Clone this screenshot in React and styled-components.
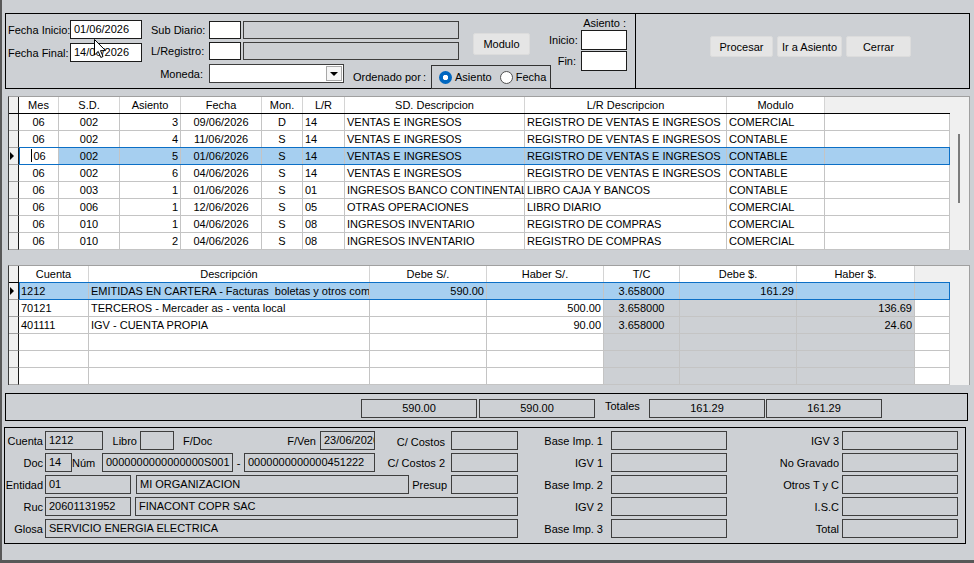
import React from 'react';
import styled, { createGlobalStyle, css } from 'styled-components';

const GlobalStyle = createGlobalStyle`
  html, body {
    margin: 0;
    padding: 0;
  }
  body {
    font-family: "Liberation Sans", Arial, sans-serif;
    font-size: 11px;
    color: #000;
    background: #cdd0d4;
    overflow: hidden;
  }
`;

const grid1Cols = [
  { w: 40, align: 'center', title: 'Mes' },
  { w: 61, align: 'center', title: 'S.D.' },
  { w: 61, align: 'right', title: 'Asiento' },
  { w: 81, align: 'center', title: 'Fecha' },
  { w: 41, align: 'center', title: 'Mon.' },
  { w: 42, align: 'left', title: 'L/R' },
  { w: 180, align: 'left', title: 'SD. Descripcion' },
  { w: 202, align: 'left', title: 'L/R Descripcion' },
  { w: 98, align: 'left', title: 'Modulo' },
  { w: 125, blank: true },
];

const grid1Rows = [
  ['06', '002', '3', '09/06/2026', 'D', '14', 'VENTAS E INGRESOS', 'REGISTRO DE VENTAS E INGRESOS', 'COMERCIAL'],
  ['06', '002', '4', '11/06/2026', 'S', '14', 'VENTAS E INGRESOS', 'REGISTRO DE VENTAS E INGRESOS', 'CONTABLE'],
  ['06', '002', '5', '01/06/2026', 'S', '14', 'VENTAS E INGRESOS', 'REGISTRO DE VENTAS E INGRESOS', 'CONTABLE'],
  ['06', '002', '6', '04/06/2026', 'S', '14', 'VENTAS E INGRESOS', 'REGISTRO DE VENTAS E INGRESOS', 'CONTABLE'],
  ['06', '003', '1', '01/06/2026', 'S', '01', 'INGRESOS BANCO CONTINENTAL DOLARES', 'LIBRO CAJA Y BANCOS', 'CONTABLE'],
  ['06', '006', '1', '12/06/2026', 'S', '05', 'OTRAS OPERACIONES', 'LIBRO DIARIO', 'COMERCIAL'],
  ['06', '010', '1', '04/06/2026', 'S', '08', 'INGRESOS INVENTARIO', 'REGISTRO DE COMPRAS', 'COMERCIAL'],
  ['06', '010', '2', '04/06/2026', 'S', '08', 'INGRESOS INVENTARIO', 'REGISTRO DE COMPRAS', 'COMERCIAL'],
];

const grid2Cols = [
  { w: 70, align: 'left', title: 'Cuenta' },
  { w: 281, align: 'left', title: 'Descripción' },
  { w: 117, align: 'right', title: 'Debe S/.' },
  { w: 117, align: 'right', title: 'Haber S/.' },
  { w: 76, align: 'center', title: 'T/C', ro: true },
  { w: 117, align: 'right', title: 'Debe $.', ro: true },
  { w: 118, align: 'right', title: 'Haber $.', ro: true },
  { w: 35, blank: true },
];

const grid2Rows = [
  ['1212', 'EMITIDAS EN CARTERA - Facturas  boletas y otros comprobantes por cobrar', '590.00', '', '3.658000', '161.29', ''],
  ['70121', 'TERCEROS - Mercader as - venta local', '', '500.00', '3.658000', '', '136.69'],
  ['401111', 'IGV - CUENTA PROPIA', '', '90.00', '3.658000', '', '24.60'],
  ['', '', '', '', '', '', ''],
  ['', '', '', '', '', '', ''],
  ['', '', '', '', '', '', ''],
];

const Window = styled.div`
  position: relative;
  width: 974px;
  height: 563px;
  box-sizing: border-box;
  background: #cdd0d4;
  border-left: 2px solid #585858;
  border-bottom: 3px solid #585858;
  padding-top: 13px;
  display: flex;
  flex-direction: column;
`;

/* ---------- top filter area ---------- */

const TopBar = styled.div`
  display: flex;
  margin-left: 3px;
  height: 76px;
`;

const FilterBox = styled.div`
  width: 631px;
  box-sizing: border-box;
  border: 1px solid #000;
  display: flex;
  align-items: flex-start;
  padding-left: 2px;
`;

const ActionBox = styled.div`
  width: 335px;
  margin-left: -1px;
  box-sizing: border-box;
  border: 1px solid #000;
  display: flex;
  align-items: flex-start;
  gap: 4px;
  padding: 22px 0 0 74px;
`;

const DateColumn = styled.div`
  display: flex;
  flex-direction: column;
  gap: 4px;
  padding-top: 6px;
`;

const FormRow = styled.div`
  display: flex;
  align-items: ${p => p.$items || 'center'};
  margin-top: ${p => p.$mt || 0}px;
`;

const Label = styled.span`
  flex: none;
  width: ${p => p.$w}px;
  box-sizing: border-box;
  text-align: ${p => p.$align || 'right'};
  padding: ${p => p.$dy || 0}px ${p => p.$pr ?? 2}px 0 ${p => p.$pl ?? 0}px;
  white-space: nowrap;
  line-height: 14px;
`;

const Field = styled.div`
  flex: none;
  width: ${p => p.$w}px;
  height: ${p => p.$h || 19}px;
  margin-left: ${p => p.$ml || 0}px;
  box-sizing: border-box;
  border: 1px solid ${p => (p.$white ? '#1c1c1c' : '#3e3e3e')};
  background: ${p => (p.$white ? '#fff' : 'transparent')};
  padding: 0 3px;
  line-height: ${p => (p.$h || 19) - 2}px;
  overflow: hidden;
  white-space: nowrap;
  text-align: ${p => p.$align || 'left'};
`;

const SubBlock = styled.div`
  flex: none;
  width: 400px;
  margin-left: 9px;
  padding-top: 7px;
  display: flex;
  flex-direction: column;
`;

const SubTop = styled.div`
  display: flex;
  align-items: flex-start;
`;

const SubStack = styled.div`
  display: flex;
  flex-direction: column;
  gap: 3px;
`;

const WinButton = styled.button`
  flex: none;
  width: ${p => p.$w}px;
  height: ${p => p.$h || 21}px;
  margin: ${p => p.$mt || 0}px 0 0 ${p => p.$ml || 0}px;
  padding: 0;
  background: #e5e5e5;
  border: 1px solid #dcdcdc;
  border-radius: 2px;
  font-family: inherit;
  font-size: 11px;
  color: #000;
`;

const Combo = styled.div`
  flex: none;
  width: 135px;
  height: 19px;
  box-sizing: border-box;
  border: 1px solid #3e3e3e;
  background: #fff;
  display: flex;
  justify-content: flex-end;
  align-items: center;
  padding-right: 1px;
`;

const DropButton = styled.div`
  width: 16px;
  height: 15px;
  box-sizing: border-box;
  border: 1px solid #a8a8a8;
  background: #f6f6f6;
  display: flex;
  align-items: center;
  justify-content: center;
  &::after {
    content: '';
    border-left: 4px solid transparent;
    border-right: 4px solid transparent;
    border-top: 4px solid #000;
  }
`;

const RadioGroup = styled.div`
  flex: none;
  width: 120px;
  height: 24px;
  margin-top: 1px;
  box-sizing: border-box;
  border: 1px solid #333;
  display: flex;
  align-items: center;
  padding-left: 7px;
  gap: 8px;
`;

const RadioItem = styled.span`
  display: flex;
  align-items: center;
  gap: 3px;
`;

const RadioDot = styled.span`
  width: 13px;
  height: 13px;
  border-radius: 50%;
  box-sizing: border-box;
  flex: none;
  ${p =>
    p.$on
      ? css`
          background: radial-gradient(circle, #fff 0 2.4px, #0067c0 3px);
        `
      : css`
          background: #fff;
          border: 1px solid #505050;
        `}
`;

const AsientoColumn = styled.div`
  flex: none;
  width: 78px;
  margin-left: -2px;
  padding-top: 2px;
  display: flex;
  flex-direction: column;
  gap: 1px;
`;

const AsientoTitle = styled.div`
  text-align: right;
  line-height: 14px;
  padding-right: 1px;
  margin-bottom: -1px;
`;

/* ---------- data grids ---------- */

const Grid = styled.div`
  margin: ${p => p.$mt}px 0 0 6px;
  width: 962px;
  box-sizing: border-box;
  border: 1px solid #a0a0a0;
  border-left-color: #3a3a3a;
  border-bottom: none;
  display: flex;
  background: #fff;
`;

const Table = styled.div`
  width: 941px;
  display: flex;
  flex-direction: column;
`;

const HeadRow = styled.div`
  display: flex;
  height: 17px;
  box-sizing: border-box;
  border-bottom: 1px solid #000;
`;

const HeadCell = styled.div`
  flex: none;
  width: ${p => p.$w}px;
  box-sizing: border-box;
  line-height: 16px;
  text-align: center;
  white-space: nowrap;
  overflow: hidden;
  background: ${p => (p.$blank ? '#f0f0f0' : '#fff')};
  border-right: 1px solid ${p => (p.$blank ? '#f0f0f0' : '#d4d4d4')};
`;

const Row = styled.div`
  display: flex;
  height: 17px;
`;

const RowCells = styled.div`
  position: relative;
  display: flex;
  ${p =>
    p.$sel &&
    css`
      &::after {
        content: '';
        position: absolute;
        inset: -1px 0 0 0;
        border: 1px solid #0b6fc6;
        pointer-events: none;
      }
    `}
`;

const Indicator = styled.div`
  flex: none;
  width: 10px;
  height: ${p => (p.$head ? 16 : 17)}px;
  box-sizing: border-box;
  background: #f0f0f0;
  border-right: 1px solid #1a1a1a;
  border-bottom: ${p => (p.$head ? 'none' : '1px solid #a0a0a0')};
  display: flex;
  align-items: center;
  padding-left: 1px;
  ${p =>
    p.$sel &&
    css`
      &::after {
        content: '';
        border-left: 4px solid #000;
        border-top: 4px solid transparent;
        border-bottom: 4px solid transparent;
      }
    `}
`;

const Cell = styled.div`
  flex: none;
  width: ${p => p.$w}px;
  height: 17px;
  box-sizing: border-box;
  line-height: 16px;
  padding: 0 2px;
  border-right: 1px solid #c4c4c4;
  border-bottom: 1px solid #c4c4c4;
  text-align: ${p => p.$align || 'left'};
  white-space: pre;
  overflow: hidden;
  background: ${p => p.$bg};
`;

const Caret = styled.span`
  display: inline-block;
  width: 1px;
  height: 13px;
  background: #000;
  vertical-align: -2px;
  margin-right: 1px;
`;

const ScrollTrack = styled.div`
  position: relative;
  width: 19px;
  background: #f0f0f0;
`;

const ScrollThumb = styled.div`
  position: absolute;
  left: 8px;
  top: 37px;
  width: 2px;
  height: 69px;
  background: #7c7c7c;
`;

/* ---------- totals + detail ---------- */

const TotalsBar = styled.div`
  margin: 8px 0 0 3px;
  width: 963px;
  height: 28px;
  box-sizing: border-box;
  border: 1px solid #000;
  display: flex;
  align-items: flex-start;
  padding: 5px 0 0 355px;
`;

const DetailPanel = styled.div`
  margin: 6px 0 0 2px;
  width: 962px;
  height: 117px;
  box-sizing: border-box;
  border: 1px solid #000;
  display: flex;
  padding-top: 3px;
`;

const DetailColumn = styled.div`
  display: flex;
  flex-direction: column;
  gap: 3px;
`;

const Cursor = styled.svg`
  position: absolute;
  left: 92px;
  top: 39px;
  pointer-events: none;
`;

const bgFor = (col, selected) => {
  if (selected) return '#a6cff0';
  if (col.ro) return '#cdd0d4';
  return '#fff';
};

const DataGrid = ({ cols, rows, selected, focusFirst, mt, thumb }) => (
  <Grid $mt={mt}>
    <Table>
      <HeadRow>
        <Indicator $head />
        {cols.map((c, i) => (
          <HeadCell key={i} $w={c.w} $blank={c.blank}>
            {c.title}
          </HeadCell>
        ))}
      </HeadRow>
      {rows.map((r, ri) => {
        const sel = ri === selected;
        return (
          <Row key={ri}>
            <Indicator $sel={sel} />
            <RowCells $sel={sel}>
              {cols.map((c, ci) => {
                const focus = sel && focusFirst && ci === 0;
                return (
                  <Cell
                    key={ci}
                    $w={c.w}
                    $align={c.align}
                    $bg={focus ? '#fff' : bgFor(c, sel)}
                  >
                    {focus && <Caret />}
                    {c.blank ? '' : r[ci]}
                  </Cell>
                );
              })}
            </RowCells>
          </Row>
        );
      })}
    </Table>
    <ScrollTrack>{thumb && <ScrollThumb />}</ScrollTrack>
  </Grid>
);

const App = () => {
  return (
    <>
      <GlobalStyle />
      <Window>
        <TopBar>
          <FilterBox>
            <DateColumn>
              <FormRow>
                <Label $w={62} $align='left' $pr={0}>Fecha Inicio:</Label>
                <Field $w={72} $white>01/06/2026</Field>
              </FormRow>
              <FormRow>
                <Label $w={62} $align='left' $pr={0}>Fecha Final:</Label>
                <Field $w={72} $white>14/06/2026</Field>
              </FormRow>
            </DateColumn>

            <SubBlock>
              <SubTop>
                <SubStack>
                  <FormRow>
                    <Label $w={58} $pr={6}>Sub Diario:</Label>
                    <Field $w={32} $h={18} $white />
                    <Field $w={216} $h={18} $ml={2} />
                  </FormRow>
                  <FormRow>
                    <Label $w={58} $pr={6}>L/Registro:</Label>
                    <Field $w={32} $h={18} $white />
                    <Field $w={216} $h={18} $ml={2} />
                  </FormRow>
                </SubStack>
                <WinButton $w={57} $h={22} $ml={14} $mt={12}>Modulo</WinButton>
              </SubTop>
              <FormRow $mt={4} $items='flex-start'>
                <Label $w={58} $pr={6} $dy={3}>Moneda:</Label>
                <Combo>
                  <DropButton />
                </Combo>
                <Label $w={74} $align='left' $pl={9} $pr={0} $dy={6}>Ordenado por</Label>
                <Label $w={13} $align='left' $pl={5} $pr={0} $dy={6}>:</Label>
                <RadioGroup>
                  <RadioItem>
                    <RadioDot $on />
                    Asiento
                  </RadioItem>
                  <RadioItem>
                    <RadioDot />
                    Fecha
                  </RadioItem>
                </RadioGroup>
              </FormRow>
            </SubBlock>

            <AsientoColumn>
              <AsientoTitle>Asiento :</AsientoTitle>
              <FormRow>
                <Label $w={32} $pr={5}>Inicio:</Label>
                <Field $w={46} $h={20} $white />
              </FormRow>
              <FormRow>
                <Label $w={32} $pr={5}>Fin:</Label>
                <Field $w={46} $h={20} $white />
              </FormRow>
            </AsientoColumn>
          </FilterBox>

          <ActionBox>
            <WinButton $w={63}>Procesar</WinButton>
            <WinButton $w={65}>Ir a Asiento</WinButton>
            <WinButton $w={65}>Cerrar</WinButton>
          </ActionBox>
        </TopBar>

        <DataGrid cols={grid1Cols} rows={grid1Rows} selected={2} focusFirst mt={7} thumb />
        <DataGrid cols={grid2Cols} rows={grid2Rows} selected={0} mt={15} />

        <TotalsBar>
          <Field $w={116} $align='center'>590.00</Field>
          <Field $w={116} $ml={2} $align='center'>590.00</Field>
          <Label $w={54} $align='left' $pl={10} $pr={0}>Totales</Label>
          <Field $w={116} $align='center'>161.29</Field>
          <Field $w={116} $ml={1} $align='center'>161.29</Field>
        </TotalsBar>

        <DetailPanel>
          <DetailColumn>
            <FormRow>
              <Label $w={40}>Cuenta</Label>
              <Field $w={58}>1212</Field>
              <Label $w={37} $pr={3}>Libro</Label>
              <Field $w={34} />
              <Label $w={46} $align='left' $pl={9}>F/Doc</Label>
              <Label $w={100} $pr={4}>F/Ven</Label>
              <Field $w={55}>23/06/2026</Field>
              <Label $w={76} $pr={6} $dy={2}>C/ Costos</Label>
              <Field $w={67} />
            </FormRow>
            <FormRow>
              <Label $w={40}>Doc</Label>
              <Field $w={27}>14</Field>
              <Label $w={30} $align='left' $pl={5} $dy={-3}>Núm</Label>
              <Field $w={131}>0000000000000000S001</Field>
              <Label $w={11} $align='center' $pr={0}>-</Label>
              <Field $w={131}>0000000000000451222</Field>
              <Label $w={76} $pr={6}>C/ Costos 2</Label>
              <Field $w={67} />
            </FormRow>
            <FormRow>
              <Label $w={40}>Entidad</Label>
              <Field $w={86}>01</Field>
              <Field $w={273} $ml={5}>MI ORGANIZACION</Field>
              <Label $w={42} $pr={4}>Presup</Label>
              <Field $w={67} />
            </FormRow>
            <FormRow>
              <Label $w={40}>Ruc</Label>
              <Field $w={86}>20601131952</Field>
              <Field $w={383} $ml={4}>FINACONT COPR SAC</Field>
            </FormRow>
            <FormRow>
              <Label $w={40}>Glosa</Label>
              <Field $w={473}>SERVICIO ENERGIA ELECTRICA</Field>
            </FormRow>
          </DetailColumn>

          <DetailColumn>
            {['Base Imp. 1', 'IGV 1', 'Base Imp. 2', 'IGV 2', 'Base Imp. 3'].map(t => (
              <FormRow key={t}>
                <Label $w={93} $pr={8}>{t}</Label>
                <Field $w={116} />
              </FormRow>
            ))}
          </DetailColumn>

          <DetailColumn>
            {['IGV 3', 'No Gravado', 'Otros T y C', 'I.S.C', 'Total'].map(t => (
              <FormRow key={t}>
                <Label $w={115} $pr={3}>{t}</Label>
                <Field $w={116} />
              </FormRow>
            ))}
          </DetailColumn>
        </DetailPanel>

        <Cursor width='13' height='20' viewBox='0 0 13 20'>
          <path
            d='M0.5 0.5 L0.5 16 L4.2 12.4 L6.8 18.5 L9 17.5 L6.5 11.6 L11.5 11.6 Z'
            fill='#fff'
            stroke='#000'
            strokeWidth='1'
          />
        </Cursor>
      </Window>
    </>
  );
};

export default App;
